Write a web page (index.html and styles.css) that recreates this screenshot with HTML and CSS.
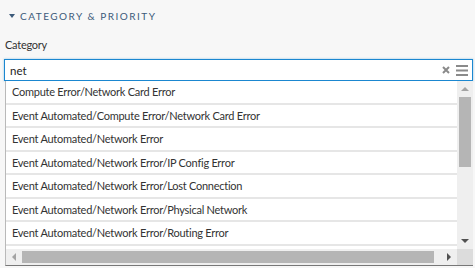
FILE: index.html
```html
<!DOCTYPE html>
<html lang="en">
<head>
  <meta charset="UTF-8" />
  <title>Category &amp; Priority</title>
  <link rel="stylesheet" href="styles.css">
</head>
<body>
  <section class="panel">
    <h3 class="section-title"><span class="caret"></span>Category &amp; Priority</h3>

    <label class="field-label" for="category">Category</label>
    <div class="combo">
      <div class="combo-input">
        <input id="category" type="text" value="net" />
        <svg class="clear" width="8" height="8" viewBox="0 0 8 8">
          <path d="M1 1 L7 7 M7 1 L1 7" stroke="#8a8a8a" stroke-width="2"/>
        </svg>
        <svg class="menu" width="12" height="11" viewBox="0 0 12 11">
          <rect x="0" y="0" width="12" height="2" fill="#8a8a8a"/>
          <rect x="0" y="4.5" width="12" height="2" fill="#8a8a8a"/>
          <rect x="0" y="9" width="12" height="2" fill="#8a8a8a"/>
        </svg>
      </div>

      <div class="dropdown">
        <ul class="options">
          <li>Compute Error/Network Card Error</li>
          <li>Event Automated/Compute Error/Network Card Error</li>
          <li>Event Automated/Network Error</li>
          <li>Event Automated/Network Error/IP Config Error</li>
          <li>Event Automated/Network Error/Lost Connection</li>
          <li>Event Automated/Network Error/Physical Network</li>
          <li>Event Automated/Network Error/Routing Error</li>
          <li></li>
        </ul>
        <div class="vscroll">
          <span class="arrow up"></span>
          <div class="vtrack"><div class="vthumb"></div></div>
          <span class="arrow down"></span>
        </div>
        <div class="hscroll">
          <span class="arrow left"></span>
          <div class="htrack"><div class="hthumb"></div></div>
          <span class="arrow right"></span>
        </div>
        <div class="corner"></div>
      </div>
    </div>
  </section>
</body>
</html>
```

FILE: styles.css
```css
body {
  margin: 0;
  background: #f7f7f7;
  font-family: Lato, "Open Sans", sans-serif;
  color: #333;
  width: 475px;
  height: 268px;
  overflow: hidden;
}

.panel {
  padding: 8px 0 0 4px;
}

.section-title {
  display: flex;
  align-items: center;
  margin: 0 0 0 5px;
  font-size: 10px;
  font-weight: normal;
  text-transform: uppercase;
  letter-spacing: 1.5px;
  color: #3c5a7a;
  line-height: 16px;
}

.caret {
  width: 0;
  height: 0;
  border-left: 3px solid transparent;
  border-right: 3px solid transparent;
  border-top: 4px solid #3c5a7a;
  margin-right: 5px;
}

.field-label {
  display: block;
  margin: 14px 0 0 1px;
  font-size: 11px;
  letter-spacing: -0.25px;
  line-height: 14px;
  color: #333;
}

.combo {
  margin-top: 7px;
  width: 469px;
}

.combo-input {
  display: flex;
  align-items: center;
  height: 20px;
  border: 1px solid #1b87d0;
  box-shadow: 0 0 2px rgba(27,135,208,0.45);
  background: white;
  padding: 0 4px 0 5px;
}

.combo-input input {
  flex: 1;
  border: none;
  outline: none;
  padding: 0;
  font-family: Lato, sans-serif;
  font-size: 11.5px;
  color: #222;
  background: transparent;
}

.clear {
  margin-right: 6px;
}

.dropdown {
  display: grid;
  grid-template-columns: 1fr 16px;
  grid-template-rows: 168px 16px;
  margin-left: 1px;
  border-left: 1px solid #b9b9b9;
  border-bottom: 1px solid #777;
  background: white;
  width: 467px;
}

.options {
  list-style: none;
  margin: 0;
  padding: 0;
  overflow: hidden;
}

.options li {
  box-sizing: border-box;
  height: 23.5px;
  line-height: 21px;
  padding-left: 6px;
  font-size: 11px;
  letter-spacing: -0.25px;
  color: #333;
  border-bottom: 2px solid #e6e6e6;
  white-space: nowrap;
}

.vscroll {
  background: #efefef;
  display: flex;
  flex-direction: column;
  align-items: center;
}

.vtrack {
  flex: 1;
  width: 100%;
  padding: 0 2px;
  box-sizing: border-box;
}

.vthumb {
  margin-top: 2px;
  height: 70px;
  background: #b5b5b5;
}

.hscroll {
  background: #efefef;
  display: flex;
  align-items: center;
}

.htrack {
  flex: 1;
  height: 100%;
  padding: 2px 0;
  box-sizing: border-box;
}

.hthumb {
  margin-left: 1px;
  width: 412px;
  height: 100%;
  background: #b5b5b5;
}

.corner {
  background: #dcdcdc;
}

.arrow {
  width: 0;
  height: 0;
  border: 4px solid transparent;
}

.arrow.up {
  border-bottom: 4px solid #a3a3a3;
  border-top: none;
  margin: 6px 0 4px;
}

.arrow.down {
  border-top: 4px solid #505050;
  border-bottom: none;
  margin: 4px 0 6px;
}

.arrow.left {
  border-right: 4px solid #a3a3a3;
  border-left: none;
  margin: 0 5px 0 6px;
}

.arrow.right {
  border-left: 4px solid #505050;
  border-right: none;
  margin: 0 6px 0 9px;
}
```
